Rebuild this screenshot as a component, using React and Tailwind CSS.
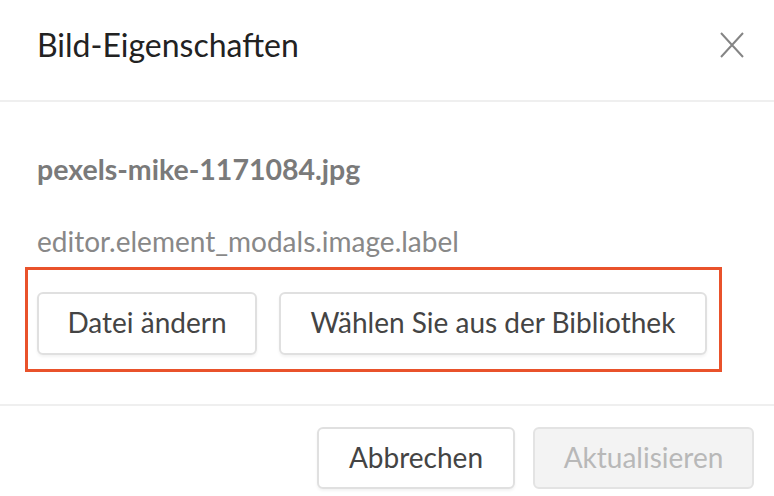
export default function App() {
  return (
    <div className="w-[774px] h-[496px] bg-white overflow-hidden" style={{ fontFamily: 'Lato, "Open Sans", sans-serif' }}>
      {/* Header */}
      <div className="h-[102px] flex items-center justify-between pl-[37px] pr-[30px] pb-[10px] border-b-2 border-[#efefef]">
        <h1 className="text-[32px] leading-[32px] text-[#222222]">Bild-Eigenschaften</h1>
        <button className="w-[24px] h-[26px] flex items-center justify-center">
          <svg width="24" height="26" viewBox="0 0 24 26" fill="none" stroke="#858585" strokeWidth="2">
            <path d="M1 1L23 25M23 1L1 25" />
          </svg>
        </button>
      </div>

      {/* Body */}
      <div className="pl-[37px] pt-[53px]">
        <p className="text-[28.5px] leading-[28px] font-bold text-[#7a7a7a]">pexels-mike-1171084.jpg</p>
        <p className="mt-[44px] text-[28px] leading-[28px] text-[#888888]">editor.element_modals.image.label</p>
        <div className="mt-[12px] -ml-[12px] w-[697px] h-[105px] border-[3px] border-[#e9522b] pt-[22px] pl-[9px] flex gap-[22px]">
          <button className="w-[220px] h-[63px] pb-[3px] rounded-[6px] border-2 border-[#e0e0e0] bg-white text-[28px] text-[#444444] shadow-[0_2px_3px_rgba(0,0,0,0.05)]">
            Datei ändern
          </button>
          <button className="w-[428px] h-[63px] pb-[3px] rounded-[6px] border-2 border-[#e0e0e0] bg-white text-[28px] text-[#444444] shadow-[0_2px_3px_rgba(0,0,0,0.05)]">
            Wählen Sie aus der Bibliothek
          </button>
        </div>
      </div>

      {/* Footer */}
      <div className="mt-[32px] border-t-2 border-[#efefef] pt-[21px] pr-[20px] flex justify-end gap-[18px]">
        <button className="w-[198px] h-[62px] pb-[3px] rounded-[6px] border-2 border-[#e0e0e0] bg-white text-[28px] text-[#444444] shadow-[0_2px_3px_rgba(0,0,0,0.05)]">
          Abbrechen
        </button>
        <button className="w-[221px] h-[62px] pb-[3px] rounded-[6px] border-2 border-[#e3e3e3] bg-[#f3f3f3] text-[28px] text-[#b8b8b8]" disabled>
          Aktualisieren
        </button>
      </div>
    </div>
  );
}
